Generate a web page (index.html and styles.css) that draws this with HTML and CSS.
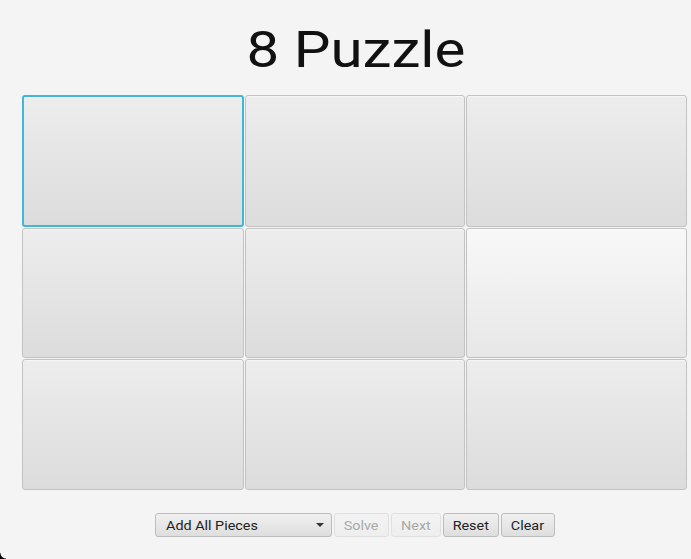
FILE: index.html
```html
<!DOCTYPE html>
<html>
<head>
<meta charset="utf-8">
<link rel="stylesheet" href="styles.css">
</head>
<body>
<div class="window">
  <h1 class="title"><span class="wide">8 Puzzle</span></h1>
  <div class="board">
    <div class="cell focused"></div>
    <div class="cell"></div>
    <div class="cell"></div>
    <div class="cell"></div>
    <div class="cell"></div>
    <div class="cell hover"></div>
    <div class="cell"></div>
    <div class="cell"></div>
    <div class="cell"></div>
  </div>
  <div class="controls">
    <div class="combo"><span class="label">Add All Pieces</span><span class="arrow"></span></div>
    <button class="btn disabled solve"><span class="label">Solve</span></button>
    <button class="btn disabled next"><span class="label">Next</span></button>
    <button class="btn reset"><span class="label">Reset</span></button>
    <button class="btn clear"><span class="label">Clear</span></button>
  </div>
  <div class="corner"></div>
</div>
</body>
</html>
```
FILE: styles.css
```css
html, body {
  margin: 0;
  padding: 0;
  background: #f4f4f4;
}
.window {
  position: relative;
  width: 691px;
  height: 559px;
  background: #f4f4f4;
  font-family: Roboto, "Liberation Sans", sans-serif;
  overflow: hidden;
  box-sizing: border-box;
  padding: 0 2px 0 22px;
}
.title {
  margin: 0;
  height: 95px;
  box-sizing: border-box;
  padding-top: 20px;
  text-align: center;
  font-weight: 400;
  font-size: 50px;
  line-height: 60px;
  color: #111;
}
.wide {
  display: inline-block;
  transform: scaleX(1.165);
}
.board {
  display: grid;
  grid-template-columns: 223px 221px 222px;
  grid-template-rows: 133px 131px 132px;
  width: 667px;
}
.cell {
  box-sizing: border-box;
  margin: 0 1px 1px 0;
  border: 1px solid #c2c2c2;
  border-radius: 3px;
  background: linear-gradient(#ededed, #dcdcdc);
  box-shadow: inset 0 1px 0 rgba(255,255,255,0.5);
}
.cell.hover {
  background: linear-gradient(#f8f8f8, #e7e7e7);
}
.cell.focused {
  border: 2px solid #3fb7d6;
}
.controls {
  display: flex;
  justify-content: center;
  gap: 2px;
  margin-top: 22px;
  padding-right: 2px;
}
.combo, .btn {
  height: 24px;
  box-sizing: border-box;
  border: 1px solid #bdbdbd;
  border-radius: 3px;
  background: linear-gradient(#f0f0f0, #dedede);
  font-family: Roboto, "Liberation Sans", sans-serif;
  font-size: 12.5px;
  color: #222;
  padding: 0;
  display: flex;
  align-items: center;
  justify-content: center;
}
.label {
  display: inline-block;
  transform: scaleX(1.15);
}
.combo {
  width: 177px;
  justify-content: space-between;
  padding: 0 7px 0 10px;
}
.combo .label {
  transform-origin: left center;
}
.arrow {
  width: 0;
  height: 0;
  border-left: 4px solid transparent;
  border-right: 4px solid transparent;
  border-top: 4px solid #333;
}
.btn.solve { width: 55px; }
.btn.next { width: 50px; }
.btn.reset { width: 56px; }
.btn.clear { width: 54px; }
.btn.disabled {
  color: #a8a8a8;
  border-color: #e0e0e0;
  background: linear-gradient(#f3f3f3, #eeeeee);
}
.corner {
  position: absolute;
  left: 0;
  bottom: 0;
  width: 6px;
  height: 6px;
  background: radial-gradient(circle at 100% 0, transparent 5px, #000 6px);
}
```
